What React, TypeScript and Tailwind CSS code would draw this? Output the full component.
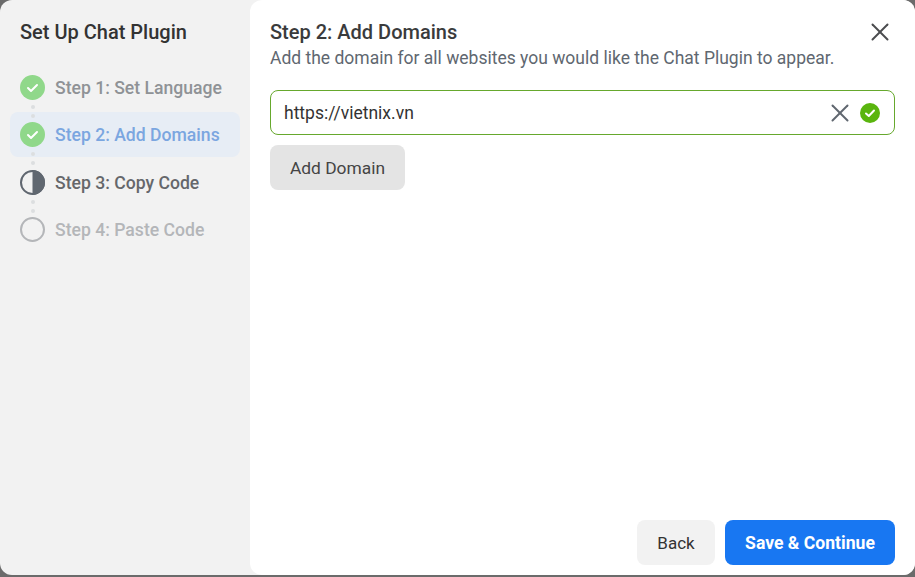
import { X } from "lucide-react";

const steps = [
  { label: "Step 1: Set Language", state: "done", text: "text-[#8f9296]" },
  { label: "Step 2: Add Domains", state: "done", text: "text-[#7ba6e0]", active: true },
  { label: "Step 3: Copy Code", state: "half", text: "text-[#65676b]" },
  { label: "Step 4: Paste Code", state: "todo", text: "text-[#b4b6b9]" },
];

function StepIcon({ state }: { state: string }) {
  if (state === "done") {
    return (
      <svg width="25" height="25" viewBox="0 0 25 25">
        <circle cx="12.5" cy="12.5" r="12.5" fill="#90d88a" />
        <path d="M8 13l3 3 6-6" fill="none" stroke="#fff" strokeWidth="2" strokeLinecap="round" strokeLinejoin="round" />
      </svg>
    );
  }
  if (state === "half") {
    return (
      <svg width="25" height="25" viewBox="0 0 25 25">
        <circle cx="12.5" cy="12.5" r="11.5" fill="none" stroke="#606770" strokeWidth="2" />
        <path d="M12.5 0a12.5 12.5 0 0 1 0 25z" fill="#606770" />
      </svg>
    );
  }
  return (
    <svg width="25" height="25" viewBox="0 0 25 25">
      <circle cx="12.5" cy="12.5" r="11.5" fill="none" stroke="#b4b6b9" strokeWidth="2" />
    </svg>
  );
}

function Dots() {
  return (
    <div className="relative z-10 h-[22px] -my-[9.75px] ml-[20px] w-[5px] flex flex-col items-center justify-center gap-[5px]">
      <div className="w-[4px] h-[4px] rounded-full bg-[#dcdee0]" />
      <div className="w-[4px] h-[4px] rounded-full bg-[#dcdee0]" />
    </div>
  );
}

export default function App() {
  return (
    <div className="w-[915px] h-[577px] bg-[#6b6b6b] font-['Roboto',sans-serif] overflow-hidden">
      <div className="h-[575px] flex bg-[#f2f2f2] rounded-[12px] overflow-hidden">
        {/* Sidebar */}
        <aside className="w-[250px] shrink-0 pt-[20px] px-[10px]">
          <h1 className="px-[10px] text-[20px] leading-[24px] font-medium text-[#333333]">Set Up Chat Plugin</h1>
          <div className="mt-[20.75px]">
            {steps.map((step, i) => (
              <div key={step.label}>
                {i > 0 && <Dots />}
                <div className={`h-[45px] pl-[10px] flex items-center gap-[10px] rounded-[8px] ${step.active ? "bg-[#e7edf5]" : ""}`}>
                  <StepIcon state={step.state} />
                  <span className={`pt-[1px] text-[17.6px] font-medium ${step.text}`}>{step.label}</span>
                </div>
              </div>
            ))}
          </div>
        </aside>

        {/* Main panel */}
        <main className="flex-1 bg-white rounded-l-[12px] pt-[20px] px-[20px] pb-[10px] flex flex-col">
          <div className="flex justify-between items-start">
            <div>
              <h2 className="text-[20px] leading-[24px] font-medium text-[#3a3b3c]">Step 2: Add Domains</h2>
              <p className="mt-[2px] text-[17.5px] leading-[24px] text-[#606770]">
                Add the domain for all websites you would like the Chat Plugin to appear.
              </p>
            </div>
            <X size={30} strokeWidth={1.6} className="text-[#4b4c4f] -mt-[3px]" />
          </div>

          <div className="mt-[20px] h-[45px] border border-[#66a82d] rounded-[8px] pl-[13px] pr-[14px] flex items-center">
            <span className="flex-1 pt-[1px] text-[17.5px] text-[#333333]">https://vietnix.vn</span>
            <X size={30} strokeWidth={1.6} className="text-[#606770] mr-[5px]" />
            <svg width="20" height="20" viewBox="0 0 20 20">
              <circle cx="10" cy="10" r="10" fill="#5ab50e" />
              <path d="M6 10.5l2.8 2.5L14 7.5" fill="none" stroke="#fff" strokeWidth="2" strokeLinecap="round" strokeLinejoin="round" />
            </svg>
          </div>

          <button className="mt-[10px] w-[135px] h-[45px] pt-[1px] bg-[#e4e4e4] rounded-[8px] text-[17.4px] text-[#444444]">
            Add Domain
          </button>

          <div className="mt-auto flex justify-end gap-[10px]">
            <button className="w-[78px] h-[45px] pt-[2px] bg-[#f2f2f2] rounded-[8px] text-[17px] text-[#333333]">Back</button>
            <button className="w-[170px] h-[45px] pt-[1px] bg-[#1877f2] rounded-[8px] text-[17.6px] font-bold text-white">
              Save &amp; Continue
            </button>
          </div>
        </main>
      </div>
    </div>
  );
}
